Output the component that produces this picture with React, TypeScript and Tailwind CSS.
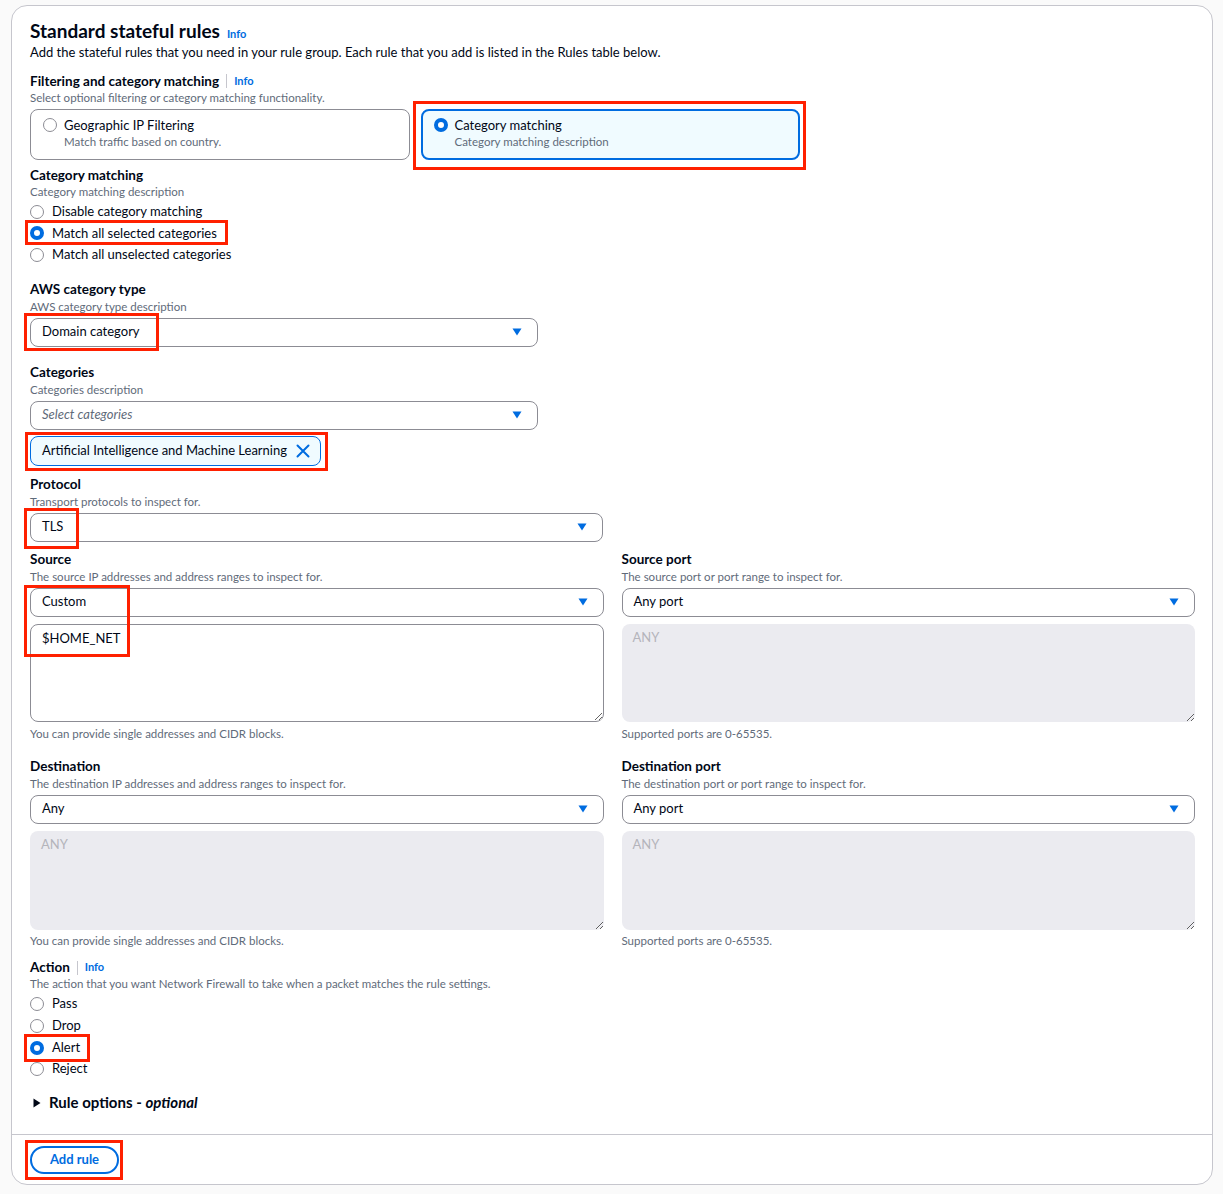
import React from "react";

const FONT = { fontFamily: "Lato, 'Liberation Sans', Arial, sans-serif" };

function Caret() {
  return (
    <svg width="10" height="8" viewBox="0 0 10 8" className="shrink-0">
      <path d="M0.5 0.5 L9.5 0.5 L5 7.5 Z" fill="#006ce0" />
    </svg>
  );
}

function Select({ value, placeholder, w }: { value?: string; placeholder?: string; w: string }) {
  return (
    <div className={`${w} h-[29px] border border-[#8c8c94] rounded-[8px] bg-white flex items-center justify-between pl-[11px] pr-[15px]`}>
      {value ? (
        <span className="text-[13px] text-[#000716]">{value}</span>
      ) : (
        <span className="text-[13px] italic text-[#5f6b7a]">{placeholder}</span>
      )}
      <Caret />
    </div>
  );
}

function Radio({ checked }: { checked?: boolean }) {
  return checked ? (
    <span className="block w-[14px] h-[14px] rounded-full border-[4px] border-[#006ce0] bg-white shrink-0 box-border" />
  ) : (
    <span className="block w-[14px] h-[14px] rounded-full border border-[#8c8c94] bg-white shrink-0 box-border" />
  );
}

function RadioRow({ label, checked, h }: { label: string; checked?: boolean; h: string }) {
  return (
    <div className={`flex items-center gap-[8px] ${h}`}>
      <Radio checked={checked} />
      <span className="text-[13px] text-[#000716]">{label}</span>
    </div>
  );
}

function Label({ text, info, mt }: { text: string; info?: boolean; mt: string }) {
  return (
    <div className={`flex items-center h-[16px] ${mt}`}>
      <span className="text-[13.5px] font-bold text-[#000716]">{text}</span>
      {info && (
        <>
          <span className="mx-[7px] w-px h-[14px] bg-[#c6c6cd]" />
          <span className="text-[11px] font-bold text-[#006ce0]">Info</span>
        </>
      )}
    </div>
  );
}

function Desc({ text, mt = "mt-[2px]" }: { text: string; mt?: string }) {
  return <div className={`h-[14px] leading-[14px] text-[11.5px] text-[#5f6b7a] ${mt}`}>{text}</div>;
}

function Hint({ text, mt }: { text: string; mt: string }) {
  return <div className={`${mt} h-[14px] leading-[14px] text-[11.5px] text-[#5f6b7a]`}>{text}</div>;
}

function RedBox({ l, t, r, b }: { l: number; t: number; r: number; b: number }) {
  return (
    <div
      className="absolute border-[3px] border-[#ff2000] pointer-events-none"
      style={{ left: l, top: t, width: r - l, height: b - t }}
    />
  );
}

function DisabledArea({ h }: { h: string }) {
  return (
    <textarea
      disabled
      placeholder="ANY"
      className={`mt-[7px] block w-full ${h} rounded-[8px] px-[11px] py-[4px] text-[13px] leading-[18px] bg-[#ebebf0] placeholder:text-[#b4b4bb] outline-none`}
    />
  );
}

export default function App() {
  return (
    <div className="relative min-h-[1194px] bg-[#fafafa] pt-[5px] pl-[11px] pr-[10px] pb-[9px]" style={FONT}>
      <div className="w-[1202px] h-[1180px] bg-white border border-[#c6c6cd] rounded-[16px] flex flex-col">
        <div className="pl-[18px] pr-[17px] pt-[14px] flex-1">
          <div className="flex items-baseline h-[22px]">
            <h2 className="text-[19px] leading-[22px] font-bold text-[#000716]">Standard stateful rules</h2>
            <span className="ml-[7px] text-[11px] font-bold text-[#006ce0]">Info</span>
          </div>
          <div className="mt-[2px] h-[16px] leading-[16px] text-[13px] text-[#000716]">
            Add the stateful rules that you need in your rule group. Each rule that you add is listed in the Rules table below.
          </div>

          <Label text="Filtering and category matching" info mt="mt-[13px]" />
          <Desc text="Select optional filtering or category matching functionality." />
          <div className="mt-[4px] w-[770px] grid grid-cols-2 gap-[11px]">
            <div className="h-[51px] border border-[#8c8c94] rounded-[8px] flex items-start pl-[12px] pt-[7px] gap-[7px]">
              <div className="mt-[1px]"><Radio /></div>
              <div>
                <div className="text-[13px] leading-[16px] text-[#000716]">Geographic IP Filtering</div>
                <div className="text-[11.5px] leading-[18px] text-[#5f6b7a]">Match traffic based on country.</div>
              </div>
            </div>
            <div className="h-[51px] border-2 border-[#006ce0] bg-[#f0fbff] rounded-[8px] flex items-start pl-[11px] pt-[6px] gap-[7px]">
              <div className="mt-[1px]"><Radio checked /></div>
              <div>
                <div className="text-[13px] leading-[16px] text-[#000716]">Category matching</div>
                <div className="text-[11.5px] leading-[18px] text-[#5f6b7a]">Category matching description</div>
              </div>
            </div>
          </div>

          <Label text="Category matching" mt="mt-[7px]" />
          <Desc text="Category matching description" />
          <div className="mt-[2px]">
            <RadioRow label="Disable category matching" h="h-[21.5px]" />
            <RadioRow label="Match all selected categories" checked h="h-[21.5px]" />
            <RadioRow label="Match all unselected categories" h="h-[21.5px]" />
          </div>

          <Label text="AWS category type" mt="mt-[16px]" />
          <Desc text="AWS category type description" />
          <div className="mt-[4px]"><Select value="Domain category" w="w-[508px]" /></div>

          <Label text="Categories" mt="mt-[18px]" />
          <Desc text="Categories description" />
          <div className="mt-[4px]"><Select placeholder="Select categories" w="w-[508px]" /></div>
          <div className="mt-[6px] w-[291px] h-[30px] bg-[#f0fbff] border border-[#006ce0] rounded-[8px] flex items-center justify-between pl-[11px] pr-[10px]">
            <span className="text-[13px] text-[#000716]">Artificial Intelligence and Machine Learning</span>
            <svg width="14" height="14" viewBox="0 0 14 14">
              <path d="M1.5 1.5 L12.5 12.5 M12.5 1.5 L1.5 12.5" stroke="#006ce0" strokeWidth="2" strokeLinecap="round" />
            </svg>
          </div>

          <Label text="Protocol" mt="mt-[11px]" />
          <Desc text="Transport protocols to inspect for." />
          <div className="mt-[4px]"><Select value="TLS" w="w-[573px]" /></div>

          <div className="grid grid-cols-2 gap-x-[18px] mt-[10px]">
            <div>
              <Label text="Source" mt="mt-0" />
              <Desc text="The source IP addresses and address ranges to inspect for." />
              <div className="mt-[4px]"><Select value="Custom" w="w-full" /></div>
              <textarea
                readOnly
                value="$HOME_NET"
                className="mt-[7px] block w-full h-[98px] border border-[#8c8c94] rounded-[8px] px-[11px] py-[4px] text-[13px] leading-[18px] text-[#000716] bg-white outline-none"
              />
              <Hint text="You can provide single addresses and CIDR blocks." mt="mt-[5px]" />
            </div>
            <div>
              <Label text="Source port" mt="mt-0" />
              <Desc text="The source port or port range to inspect for." />
              <div className="mt-[4px]"><Select value="Any port" w="w-full" /></div>
              <DisabledArea h="h-[98px]" />
              <Hint text="Supported ports are 0-65535." mt="mt-[5px]" />
            </div>
          </div>

          <div className="grid grid-cols-2 gap-x-[18px] mt-[18px]">
            <div>
              <Label text="Destination" mt="mt-0" />
              <Desc text="The destination IP addresses and address ranges to inspect for." />
              <div className="mt-[4px]"><Select value="Any" w="w-full" /></div>
              <DisabledArea h="h-[99px]" />
              <Hint text="You can provide single addresses and CIDR blocks." mt="mt-[4px]" />
            </div>
            <div>
              <Label text="Destination port" mt="mt-0" />
              <Desc text="The destination port or port range to inspect for." />
              <div className="mt-[4px]"><Select value="Any port" w="w-full" /></div>
              <DisabledArea h="h-[99px]" />
              <Hint text="Supported ports are 0-65535." mt="mt-[4px]" />
            </div>
          </div>

          <Label text="Action" info mt="mt-[12px]" />
          <Desc text="The action that you want Network Firewall to take when a packet matches the rule settings." mt="mt-[1px]" />
          <div className="mt-[2px]">
            <RadioRow label="Pass" h="h-[22px]" />
            <RadioRow label="Drop" h="h-[22px]" />
            <RadioRow label="Alert" checked h="h-[22px]" />
            <RadioRow label="Reject" h="h-[21px]" />
          </div>

          <div className="mt-[14px] h-[18px] flex items-center gap-[8px] pl-[3px]">
            <svg width="8" height="10" viewBox="0 0 8 10">
              <path d="M0.5 0.5 L7.5 5 L0.5 9.5 Z" fill="#000716" />
            </svg>
            <span className="text-[15px] font-bold text-[#000716]">
              Rule options - <span className="italic">optional</span>
            </span>
          </div>
        </div>

        <div className="border-t border-[#c6c6cd] pl-[18px] pt-[11px] pb-[10px]">
          <button className="w-[89px] h-[28px] rounded-full border-2 border-[#006ce0] bg-white text-[13px] font-bold text-[#006ce0]">
            Add rule
          </button>
        </div>
      </div>

      <RedBox l={413} t={101} r={806} b={170} />
      <RedBox l={25} t={220} r={228} b={245} />
      <RedBox l={24} t={313} r={159} b={351} />
      <RedBox l={25} t={432} r={328} b={471} />
      <RedBox l={24} t={508} r={79} b={549} />
      <RedBox l={24} t={585} r={130} b={657} />
      <RedBox l={24} t={1034} r={90} b={1062} />
      <RedBox l={25} t={1140} r={123} b={1180} />
    </div>
  );
}
